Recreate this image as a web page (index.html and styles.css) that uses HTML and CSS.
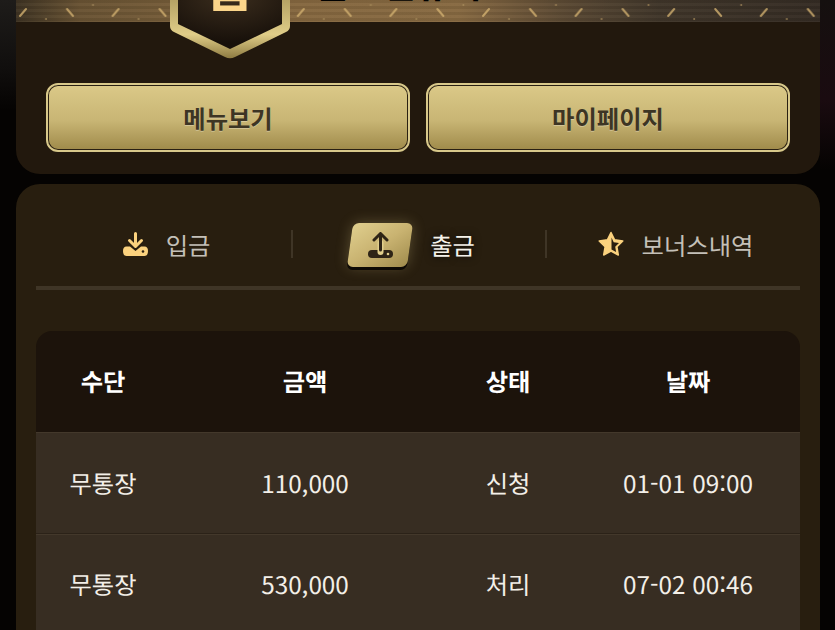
FILE: index.html
```html
<!DOCTYPE html>
<html lang="ko">
<head>
    <meta charset="UTF-8">
    <meta name="viewport" content="width=device-width, initial-scale=1.0">
    <title>출금</title>
    <link rel="stylesheet" href="styles.css">
</head>
<body>
    <div class="page">
        <section class="profile-card">
            <div class="profile-banner">
                <svg class="banner-lattice" width="804" height="22">
                    <defs>
                        <pattern id="lattice" width="92.6" height="22" patternUnits="userSpaceOnUse">
                            <path d="M51 9L57 16" stroke="#d2b070" stroke-width="2" stroke-linecap="round"/>
                            <path d="M4 16L10 9" stroke="#d2b070" stroke-width="2" stroke-linecap="round"/>
                            <circle cx="77" cy="5" r="1" fill="#a88c5c"/>
                            <circle cx="30" cy="19" r="1" fill="#a88c5c"/>
                        </pattern>
                    </defs>
                    <rect width="804" height="22" fill="url(#lattice)"/>
                </svg>
                <span class="profile-name">글로벌유저</span>
            </div>
            <svg class="rank-badge" width="126" height="60" viewBox="0 0 126 60">
                <defs>
                    <linearGradient id="badgeGold" x1="0" y1="0" x2="0" y2="1">
                        <stop offset="0" stop-color="#a8965a"/>
                        <stop offset="0.65" stop-color="#e0cd88"/>
                        <stop offset="1" stop-color="#8f7c42"/>
                    </linearGradient>
                    <radialGradient id="badgeDark" cx="0.5" cy="0.1" r="0.8">
                        <stop offset="0" stop-color="#3c2e1e"/>
                        <stop offset="1" stop-color="#17100a"/>
                    </radialGradient>
                </defs>
                <path d="M3 -10V26Q3 30 7 32L58 57Q63 59.5 68 57L119 32Q123 30 123 26V-10Z" fill="url(#badgeGold)"/>
                <path d="M11 -10V24L63 49L115 24V-10Z" fill="url(#badgeDark)"/>
            </svg>
            <span class="rank-letter">급</span>
            <div class="profile-actions">
                <button class="gold-btn">메뉴보기</button>
                <button class="gold-btn">마이페이지</button>
            </div>
        </section>

        <section class="history-card">
            <div class="tabs">
                <div class="tab tab-deposit">
                    <svg width="25" height="24" viewBox="0 0 25 24">
                        <path d="M12.500 1.500V14M6.500 8.500L12.500 14.500L18.500 8.500" fill="none" stroke="#fbd27e" stroke-width="3" stroke-linecap="round" stroke-linejoin="round"/>
                        <path d="M3.500 14.500H7L12.500 19L18 14.500H21.500Q25 14.500 25 19Q25 24 21.500 24H3.500Q0 24 0 19Q0 14.500 3.500 14.500Z" fill="#fbd27e"/>
                        <circle cx="20" cy="19.500" r="1.300" fill="#2a1f10"/>
                    </svg>
                    <span>입금</span>
                </div>
                <div class="tab-sep"></div>
                <div class="tab tab-withdraw">
                    <div class="tab-chip">
                        <svg width="25" height="26" viewBox="0 0 25 26">
                            <rect x="0" y="18" width="25" height="8" rx="4" fill="#2e2416"/>
                            <path d="M12.500 11V20" fill="none" stroke="#e2cf8c" stroke-width="6" stroke-linecap="round"/>
                            <path d="M12.500 2V18M6 8L12.500 1.500L19 8" fill="none" stroke="#2e2416" stroke-width="3" stroke-linecap="round" stroke-linejoin="round"/>
                            <circle cx="20" cy="22" r="1.300" fill="#e2cf8c"/>
                        </svg>
                    </div>
                    <span>출금</span>
                </div>
                <div class="tab-sep"></div>
                <div class="tab tab-bonus">
                    <svg width="26" height="26" viewBox="0 0 26 26">
                        <path d="M13 1.500L16.600 8.800L24.800 10L18.900 15.800L20.300 24L13 20.100L5.700 24L7.100 15.800L1.200 10L9.400 8.800Z" fill="#fbd27e" stroke="#fbd27e" stroke-width="1.500" stroke-linejoin="round"/>
                        <path d="M13.500 6.500L15.700 11.300L21 12.100L17.200 15.800L18.100 21L13.500 18.600Z" fill="#2a1f10"/>
                    </svg>
                    <span>보너스내역</span>
                </div>
            </div>

            <table class="history-table">
                <colgroup>
                    <col class="col-method">
                    <col class="col-amount">
                    <col class="col-status">
                    <col class="col-date">
                </colgroup>
                <thead>
                    <tr>
                        <th>수단</th>
                        <th>금액</th>
                        <th>상태</th>
                        <th>날짜</th>
                    </tr>
                </thead>
                <tbody>
                    <tr>
                        <td>무통장</td>
                        <td>110,000</td>
                        <td>신청</td>
                        <td>01-01 09:00</td>
                    </tr>
                    <tr>
                        <td>무통장</td>
                        <td>530,000</td>
                        <td>처리</td>
                        <td>07-02 00:46</td>
                    </tr>
                </tbody>
            </table>
        </section>
    </div>
</body>
</html>
```

FILE: styles.css
```css
* {
    margin: 0;
    padding: 0;
    box-sizing: border-box;
}

html, body {
    height: 630px;
    overflow: hidden;
}

body {
    font-family: "Noto Sans CJK KR", "Noto Sans", sans-serif;
    text-rendering: geometricPrecision;
    color: #f3efe8;
    background:
        linear-gradient(to bottom, #1e1c1a 0, #100e0d 70px, #050302 110px) no-repeat left top / 16px 110px,
        linear-gradient(to bottom, #15100f 0, #1a0b10 100px, #050302 170px) no-repeat right top / 15px 170px,
        #050302;
}

.page {
    padding: 0 15px 0 16px;
}

.profile-card {
    position: relative;
    height: 174px;
    background: #22180d;
    border-radius: 0 0 24px 24px;
    overflow: hidden;
}

.profile-banner {
    position: relative;
    height: 22px;
    overflow: hidden;
    background:
        repeating-linear-gradient(to bottom, rgba(0,0,0,0.07) 0 3px, rgba(255,255,255,0.02) 3px 6px),
        linear-gradient(to right, #3e3323 0%, #6a5434 8%, #866840 35%, #886a42 55%, #5c4a34 68%, #40362a 80%, #352c24 100%);
}

.banner-lattice {
    position: absolute;
    left: 0;
    top: 0;
    opacity: 0.8;
    filter: blur(0.6px);
}

.profile-name {
    position: absolute;
    left: 300px;
    top: -35px;
    font-size: 36px;
    line-height: 36px;
    font-weight: 700;
    white-space: nowrap;
    color: #000;
}

.rank-badge {
    position: absolute;
    left: 151px;
    top: 0;
}

.rank-letter {
    position: absolute;
    left: 151px;
    top: -41px;
    width: 126px;
    text-align: center;
    font-size: 52px;
    line-height: 52px;
    font-weight: 700;
    color: #fbd58a;
}

.profile-actions {
    display: flex;
    gap: 16px;
    padding: 61px 30px 0;
}

.gold-btn {
    flex: 1;
    height: 69px;
    border: 2px solid #22180d;
    outline: 2px solid #d8c88a;
    outline-offset: -2px;
    border-radius: 12px;
    font-family: inherit;
    font-size: 24.3px;
    font-weight: 700;
    color: #3d3524;
    text-shadow: 0 1px 0 rgba(255,255,255,0.3);
    background: linear-gradient(to bottom, #dbc988 0%, #c8b574 55%, #9f8a4a 100%);
    background-clip: padding-box;
    box-shadow: inset 0 0 0 1px #2a2012;
}

.history-card {
    margin-top: 10px;
    height: 446px;
    background: #281e0f;
    border-radius: 24px 24px 0 0;
    padding: 0 20px;
}

.tabs {
    display: flex;
    align-items: center;
    height: 106px;
    padding-top: 18px;
    border-bottom: 4px solid #3f3526;
    font-size: 24.3px;
    color: #c4c0b8;
}

.tab {
    display: flex;
    align-items: center;
    justify-content: center;
    gap: 18px;
}

.tab-deposit {
    width: 255px;
    padding-left: 6px;
}

.tab-withdraw {
    width: 252px;
    padding-right: 13px;
    gap: 20px;
    color: #f5f2ea;
    text-shadow: 0 0 8px rgba(0,0,0,0.8);
}

.tab-bonus {
    flex: 1;
    padding-left: 4px;
}

.tab-sep {
    width: 2px;
    height: 28px;
    background: #3f3526;
}

.tab-chip {
    display: flex;
    align-items: center;
    justify-content: center;
    width: 60px;
    height: 44px;
    margin-top: 2px;
    border-radius: 6px;
    transform: skewX(-8deg);
    background: linear-gradient(to bottom right, #e0cf8e 0%, #c9b371 50%, #a18c4d 100%);
    box-shadow: 0 3px 0 #0e0a05, 0 0 14px rgba(226,207,140,0.28);
}

.tab-chip svg {
    transform: skewX(8deg);
}

.history-table {
    width: 100%;
    margin-top: 41px;
    border-collapse: collapse;
    table-layout: fixed;
    font-size: 24.3px;
    text-align: center;
}

.col-method { width: 134px; }
.col-amount { width: 270px; }
.col-status { width: 136px; }

.history-table th {
    height: 101px;
    padding-bottom: 3px;
    background: #1c130b;
    font-weight: 700;
    color: #fff;
}

.history-table th:first-child {
    border-top-left-radius: 16px;
}

.history-table th:last-child {
    border-top-right-radius: 16px;
}

.history-table td {
    height: 101px;
    background: #372d22;
    border-bottom: 1px solid #2b2218;
    box-shadow: inset 0 1px 0 #43382b;
    font-weight: 400;
}
```
